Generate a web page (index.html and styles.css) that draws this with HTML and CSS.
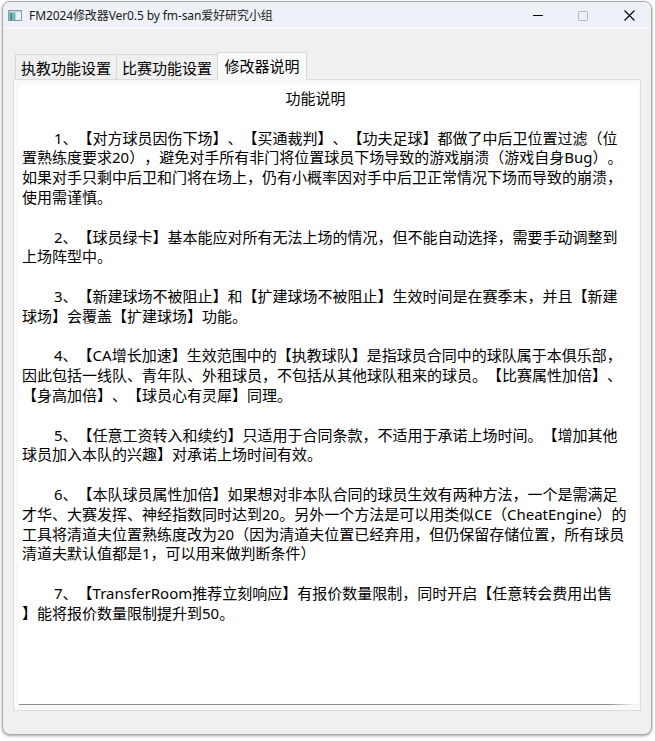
FILE: index.html
```html
<!DOCTYPE html>
<html lang="zh-CN">
<head>
<meta charset="utf-8">
<title>FM2024修改器Ver0.5 by fm-san爱好研究小组</title>
<link rel="stylesheet" href="styles.css">
</head>
<body>
<div class="window">
  <div class="titlebar">
    <svg class="app-icon" width="14" height="11" viewBox="0 0 14 11">
      <rect x="0.5" y="0.5" width="13" height="10" fill="#f4f6f8" stroke="#8a96a0"/>
      <rect x="1" y="1" width="12" height="1.5" fill="#c9d3dc"/>
      <rect x="1.5" y="2.5" width="3" height="7.5" fill="#3a8fa0"/>
      <rect x="4.5" y="2.5" width="3" height="7.5" fill="#6cb8a8"/>
      <rect x="8" y="2.5" width="5" height="7.5" fill="#e8eef2"/>
    </svg>
    <span class="title-text">FM2024修改器Ver0.5 by fm-san爱好研究小组</span>
    <div class="controls">
      <span class="ctl ctl-min"><svg width="10" height="10" viewBox="0 0 10 10"><line x1="0" y1="5.5" x2="10" y2="5.5" stroke="#000" stroke-width="1"/></svg></span>
      <span class="ctl ctl-max"><svg width="10" height="10" viewBox="0 0 10 10"><rect x="0.5" y="0.5" width="9" height="9" rx="1" fill="none" stroke="#b8b8b8" stroke-width="1"/></svg></span>
      <span class="ctl ctl-close"><svg width="11" height="11" viewBox="0 0 11 11"><path d="M0.5 0.5 L10.5 10.5 M10.5 0.5 L0.5 10.5" stroke="#000" stroke-width="1.1" fill="none"/></svg></span>
    </div>
  </div>
  <div class="client">
    <div class="tabs">
      <div class="tab tab-first">执教功能设置</div>
      <div class="tab tab-second">比赛功能设置</div>
      <div class="tab tab-active">修改器说明</div>
    </div>
    <div class="panel">
      <div class="textbox">
        <p class="heading">功能说明</p>
        <p class="para">1、【对方球员因伤下场】、【买通裁判】、【功夫足球】都做了中后卫位置过滤（位<br>置熟练度要求20），避免对手所有非门将位置球员下场导致的游戏崩溃（游戏自身Bug）。<br>如果对手只剩中后卫和门将在场上，仍有小概率因对手中后卫正常情况下场而导致的崩溃，<br>使用需谨慎。</p>
        <p class="para">2、【球员绿卡】基本能应对所有无法上场的情况，但不能自动选择，需要手动调整到<br>上场阵型中。</p>
        <p class="para">3、【新建球场不被阻止】和【扩建球场不被阻止】生效时间是在赛季末，并且【新建<br>球场】会覆盖【扩建球场】功能。</p>
        <p class="para">4、【CA增长加速】生效范围中的【执教球队】是指球员合同中的球队属于本俱乐部，<br>因此包括一线队、青年队、外租球员，不包括从其他球队租来的球员。【比赛属性加倍】、<br>【身高加倍】、【球员心有灵犀】同理。</p>
        <p class="para">5、【任意工资转入和续约】只适用于合同条款，不适用于承诺上场时间。【增加其他<br>球员加入本队的兴趣】对承诺上场时间有效。</p>
        <p class="para">6、【本队球员属性加倍】如果想对非本队合同的球员生效有两种方法，一个是需满足<br>才华、大赛发挥、神经指数同时达到20。另外一个方法是可以用类似CE（CheatEngine）的<br>工具将清道夫位置熟练度改为20（因为清道夫位置已经弃用，但仍保留存储位置，所有球员<br>清道夫默认值都是1，可以用来做判断条件）</p>
        <p class="para">7、【TransferRoom推荐立刻响应】有报价数量限制，同时开启【任意转会费用出售<br>】能将报价数量限制提升到50。</p>
      </div>
    </div>
  </div>
</div>
</body>
</html>
```

FILE: styles.css
```css
html, body {
  margin: 0;
  padding: 0;
  background: #ffffff;
}

body {
  width: 655px;
  height: 741px;
  overflow: hidden;
  font-family: "Noto Sans", "Noto Sans CJK SC", sans-serif;
  color: #000;
  text-spacing-trim: space-all;
}

.window {
  margin: 1px 0 0 2px;
  width: 650px;
  height: 734px;
  box-sizing: border-box;
  border: 1px solid #a9a9a9;
  border-radius: 8px;
  overflow: hidden;
  background: #f0f0f0;
  box-shadow: 0 1px 3px rgba(0, 0, 0, 0.35);
  display: flex;
  flex-direction: column;
}

.titlebar {
  height: 26px;
  flex: none;
  background: #eef2f8;
  border-bottom: 1px solid #fbfcfd;
  display: flex;
  align-items: center;
  font-size: 12px;
}

.app-icon {
  margin-left: 5px;
  margin-top: 1px;
  flex: none;
}

.title-text {
  margin-left: 7px;
  white-space: nowrap;
  font-family: "Noto Sans", "Noto Sans CJK SC", sans-serif;
  font-size: 12px;
  letter-spacing: -0.1px;
  color: #1a1a1a;
}

.controls {
  margin-left: auto;
  display: flex;
  align-items: center;
  height: 100%;
}

.ctl {
  display: flex;
  align-items: center;
  justify-content: center;
}

.ctl-min {
  width: 10px;
  margin-right: 35px;
}

.ctl-max {
  width: 10px;
  margin-right: 36px;
  padding-top: 1px;
}

.ctl-close {
  width: 11px;
  margin-right: 16px;
  padding-top: 1px;
}

.client {
  flex: 1;
  padding: 23px 10px 0 10px;
  display: flex;
  flex-direction: column;
}

.tabs {
  display: flex;
  align-items: flex-end;
  height: 27px;
  padding-left: 2px;
  position: relative;
  z-index: 1;
  font-size: 15px;
  font-family: "Noto Sans", "Noto Sans CJK SC", sans-serif;
}

.tab {
  box-sizing: border-box;
  height: 25px;
  background: #f0f0f0;
  border-top: 1px solid #d9d9d9;
  border-right: 1px solid #d9d9d9;
  display: flex;
  align-items: center;
  justify-content: center;
  white-space: nowrap;
  line-height: 20px;
  padding-top: 1px;
  color: #000;
}

.tab-first {
  width: 102px;
  border-left: 1px solid #d9d9d9;
}

.tab-second {
  width: 100px;
  border-right: none;
}

.tab-active {
  width: 90px;
  height: 28px;
  margin-bottom: -1px;
  background: #f9f9f9;
  border-left: 1px solid #d9d9d9;
  padding-top: 0;
  padding-bottom: 2px;
}

.panel {
  box-sizing: border-box;
  height: 632px;
  background: #f9f9f9;
  border: 1px solid #dcdcdc;
  padding: 5px 2px 5px 5px;
  display: flex;
}

.textbox {
  flex: 1;
  box-sizing: border-box;
  background:
    linear-gradient(to right, #8c8c8c 0, #8c8c8c 95%, rgba(140, 140, 140, 0) 100%) left bottom / 100% 1px no-repeat,
    #ffffff;
  padding: 4px 29px 0 3px;
  overflow: hidden;
  font-family: "Noto Sans", "Noto Sans CJK SC", sans-serif;
  font-size: 15px;
  line-height: 19.8px;
}

.heading {
  margin: 0 0 19.8px 0;
  text-align: center;
  white-space: nowrap;
}

.para {
  margin: 0 0 19.8px 0;
  text-indent: 32px;
  white-space: nowrap;
}
```
